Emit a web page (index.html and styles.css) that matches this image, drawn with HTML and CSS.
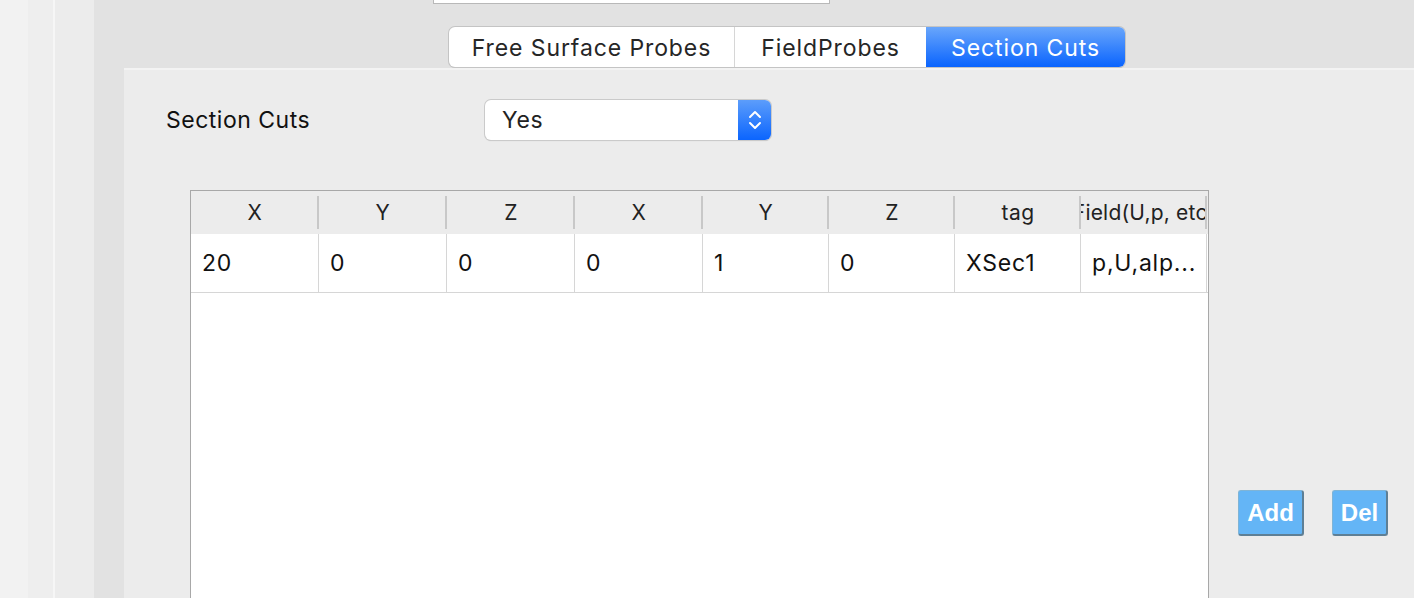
FILE: index.html
```html
<!DOCTYPE html>
<html>
<head>
<meta charset="utf-8">
<link rel="stylesheet" href="styles.css">
</head>
<body>
<div class="app">
  <div class="strip s1"></div>
  <div class="strip s2"></div>
  <div class="strip s3"></div>
  <div class="strip s4"></div>
  <div class="main">
    <div class="topfield"></div>
    <div class="tabs">
      <div class="tab t1">Free Surface Probes</div>
      <div class="tab t2">FieldProbes</div>
      <div class="tab t3 active">Section Cuts</div>
    </div>
    <div class="panel">
      <div class="formrow">
        <div class="label">Section Cuts</div>
        <div class="select">
          <span class="select-text">Yes</span>
          <span class="select-btn">
            <svg width="16" height="24" viewBox="0 0 16 24">
              <path d="M3 9 L8 4 L13 9" fill="none" stroke="#fff" stroke-width="2" stroke-linecap="round" stroke-linejoin="round"/>
              <path d="M3 15 L8 20 L13 15" fill="none" stroke="#fff" stroke-width="2" stroke-linecap="round" stroke-linejoin="round"/>
            </svg>
          </span>
        </div>
      </div>
      <div class="tablerow">
        <div class="table">
          <div class="thead">
            <div class="th w128">X</div>
            <div class="th w128">Y</div>
            <div class="th w128">Z</div>
            <div class="th w128">X</div>
            <div class="th w126">Y</div>
            <div class="th w126">Z</div>
            <div class="th w126">tag</div>
            <div class="th w126 clip"><span>Field(U,p, etc)</span></div>
          </div>
          <div class="trow">
            <div class="td w128">20</div>
            <div class="td w128">0</div>
            <div class="td w128">0</div>
            <div class="td w128">0</div>
            <div class="td w126">1</div>
            <div class="td w126">0</div>
            <div class="td w126">XSec1</div>
            <div class="td w126">p,U,alp...</div>
          </div>
        </div>
        <div class="buttons">
          <button class="btn add">Add</button>
          <button class="btn del">Del</button>
        </div>
      </div>
    </div>
  </div>
</div>
</body>
</html>
```

FILE: styles.css
```css
html, body {
  margin: 0;
  padding: 0;
  width: 1414px;
  height: 598px;
  overflow: hidden;
  font-family: "Inter", "Liberation Sans", sans-serif;
  color: #1a1a1a;
}
.app {
  display: flex;
  height: 598px;
  overflow: hidden;
}
.strip { height: 100%; flex: none; }
.s1 { width: 28px; background: #f2f2f2; }
.s2 { width: 25px; background: #eeeeee; }
.s3 { width: 2px; background: #f6f6f6; }
.s4 { width: 39px; background: #ececec; }
.main {
  flex: 1;
  background: #e2e2e2;
  display: flex;
  flex-direction: column;
  min-height: 0;
}
.topfield {
  flex: none;
  margin-left: 339px;
  width: 395px;
  height: 3px;
  background: #fff;
  border: 1px solid #b8b8b8;
  border-top: none;
}
.tabs {
  flex: none;
  display: flex;
  margin-top: 23px;
  margin-left: 355px;
  height: 40px;
  width: 676px;
  border-radius: 6px;
  box-shadow: 0 0 0 1px #c4c4c4, 0 1px 1px rgba(0,0,0,0.15);
  overflow: hidden;
  background: #fff;
}
.tab {
  display: flex;
  align-items: center;
  justify-content: center;
  box-sizing: border-box;
  padding-top: 2px;
  font-size: 23px;
  letter-spacing: 0.9px;
  color: #262626;
  height: 100%;
}
.t1 { width: 286px; border-right: 1px solid #d6d6d6; }
.t2 { width: 191px; }
.t3 { flex: 1; }
.tab.active {
  color: #fff;
  background: linear-gradient(#69a6fb, #0a64fe);
}
.panel {
  flex: 1;
  min-height: 0;
  overflow: hidden;
  margin-top: 1px;
  margin-left: 30px;
  background: #ececec;
  border-top: 2px solid #f3f3f3;
}
.formrow {
  display: flex;
  align-items: center;
  margin-top: 30px;
  padding-left: 42px;
  height: 40px;
}
.label {
  width: 319px;
  font-size: 23px;
  letter-spacing: 0.5px;
  color: #111;
}
.select {
  display: flex;
  width: 286px;
  height: 40px;
  background: #fff;
  border-radius: 6px;
  box-shadow: 0 0 0 1px #cacaca, 0 1px 1px rgba(0,0,0,0.18);
  overflow: hidden;
}
.select-text {
  flex: 1;
  display: flex;
  align-items: center;
  padding-left: 17px;
  font-size: 23px;
  letter-spacing: 0.6px;
  color: #222;
}
.select-btn {
  width: 33px;
  display: flex;
  align-items: center;
  justify-content: center;
  background: linear-gradient(#5c9dfb, #0b65fe);
}
.tablerow {
  display: flex;
  margin-top: 50px;
  margin-left: 66px;
}
.table {
  width: 1017px;
  height: 430px;
  border: 1px solid #a8a8a8;
  background: #fff;
  flex: none;
}
.thead {
  display: flex;
  height: 43px;
  background: #ececec;
}
.th {
  flex: none;
  display: flex;
  align-items: center;
  justify-content: center;
  font-size: 21px;
  letter-spacing: 0.5px;
  color: #222;
  position: relative;
  overflow: hidden;
  white-space: nowrap;
}
.th::after {
  content: "";
  position: absolute;
  right: 0;
  top: 5px;
  bottom: 5px;
  width: 2px;
  background: #c8c8c8;
}
.th.clip span { flex: none; letter-spacing: 0.2px; }
.w128 { width: 128px; }
.w126 { width: 126px; }
.trow {
  display: flex;
  height: 58px;
  border-bottom: 1px solid #d6d6d6;
}
.td {
  flex: none;
  box-sizing: border-box;
  display: flex;
  align-items: center;
  padding-left: 11px;
  font-size: 23px;
  letter-spacing: 0.8px;
  color: #111;
  border-right: 1px solid #d6d6d6;
  white-space: nowrap;
  overflow: hidden;
}
.buttons {
  display: flex;
  margin-top: 300px;
  margin-left: 29px;
  gap: 28px;
  align-items: flex-start;
}
.btn {
  height: 46px;
  background: #64b5f6;
  color: #fff;
  font-family: "Liberation Sans", Arial, sans-serif;
  font-weight: bold;
  font-size: 24px;
  border: 1px solid #7fb4d6;
  border-right: 2px solid #5e7f95;
  border-bottom: 2px solid #5e7f95;
  border-radius: 3px;
  padding: 0;
}
.add { width: 66px; }
.del { width: 56px; }
```
